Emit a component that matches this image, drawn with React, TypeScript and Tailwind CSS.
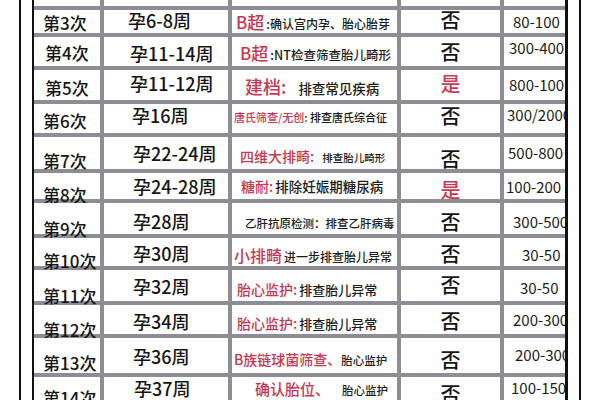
import React from "react";

const R = "text-[#c8374f]";
const K = "text-[#1b1b1b]";

type Row = {
  c1: string; t1: string;
  c2: string; t2: string;
  c3: string; t3: React.ReactNode;
  c4: string; yes?: boolean;
  c5: string; t5: string;
};

const rows: Row[] = [
  { c1: "pt-[4px] pl-[9px]", t1: "第3次", c2: "pt-[1px] pl-[24px]", t2: "孕6-8周", c3: "pt-[3px] pl-[4px]",
    t3: (<><span className={`${R} text-[17px]`}>B超</span><span className={`${K} text-[12px] ml-[2px]`}>:确认宫内孕、胎心胎芽</span></>),
    c4: "pt-[0px]", c5: "pt-[4px] pl-[9px]", t5: "80-100" },
  { c1: "pt-[7px] pl-[11px]", t1: "第4次", c2: "pt-[7px] pl-[26px]", t2: "孕11-14周", c3: "pt-[7px] pl-[8px]",
    t3: (<><span className={`${R} text-[17px]`}>B超</span><span className={`${K} text-[12.5px] ml-[2px]`}>:NT检查筛查胎儿畸形</span></>),
    c4: "pt-[5px]", c5: "pt-[3px] pl-[5px]", t5: "300-400" },
  { c1: "pt-[9px] pl-[11px]", t1: "第5次", c2: "pt-[4px] pl-[26px]", t2: "孕11-12周", c3: "pt-[7px] pl-[13px]",
    t3: (<><span className={`${R} text-[18px]`}>建档:</span><span className={`${K} text-[13.5px] ml-[12px]`}>排查常见疾病</span></>),
    c4: "pt-[4px]", yes: true, c5: "pt-[7px] pl-[5px]", t5: "800-1000" },
  { c1: "pt-[8px] pl-[9px]", t1: "第6次", c2: "pt-[2px] pl-[28px]", t2: "孕16周", c3: "pt-[8px] pl-[2px]",
    t3: (<><span className={`${R} text-[11px]`}>唐氏筛查/无创</span><span className={`${K} text-[11px]`}>: 排查唐氏综合征</span></>),
    c4: "pt-[2px]", c5: "pt-[3px] pl-[3px]", t5: "300/2000" },
  { c1: "pt-[15px] pl-[9px]", t1: "第7次", c2: "pt-[7px] pl-[29px]", t2: "孕22-24周", c3: "pt-[12px] pl-[8px]",
    t3: (<><span className={`${R} text-[14px]`}>四维大排畸:</span><span className={`${K} text-[10.5px] ml-[8px]`}>排查胎儿畸形</span></>),
    c4: "pt-[12px]", c5: "pt-[8px] pl-[4px]", t5: "500-800" },
  { c1: "pt-[13px] pl-[9px]", t1: "第8次", c2: "pt-[4px] pl-[29px]", t2: "孕24-28周", c3: "pt-[6px] pl-[9px]",
    t3: (<><span className={`${R} text-[14px]`}>糖耐:</span><span className={`${K} text-[13.5px] ml-[2px]`}>排除妊娠期糖尿病</span></>),
    c4: "pt-[7px]", yes: true, c5: "pt-[6px] pl-[2px]", t5: "100-200" },
  { c1: "pt-[17px] pl-[9px]", t1: "第9次", c2: "pt-[9px] pl-[29px]", t2: "孕28周", c3: "pt-[15px] pl-[13px]",
    t3: (<span className={`${K} text-[11.5px]`}>乙肝抗原检测：排查乙肝病毒</span>),
    c4: "pt-[9px]", c5: "pt-[11px] pl-[9px]", t5: "300-500" },
  { c1: "pt-[14px] pl-[9px]", t1: "第10次", c2: "pt-[6px] pl-[29px]", t2: "孕30周", c3: "pt-[9px] pl-[2px]",
    t3: (<><span className={`${R} text-[16px]`}>小排畸</span><span className={`${K} text-[12px] ml-[2px]`}>进一步排查胎儿异常</span></>),
    c4: "pt-[6px]", c5: "pt-[9px] pl-[18px]", t5: "30-50" },
  { c1: "pt-[17px] pl-[9px]", t1: "第11次", c2: "pt-[7px] pl-[29px]", t2: "孕32周", c3: "pt-[12px] pl-[5px]",
    t3: (<><span className={`${R} text-[14px]`}>胎心监护:</span><span className={`${K} text-[13px] ml-[2px]`}>排查胎儿异常</span></>),
    c4: "pt-[5px]", c5: "pt-[10px] pl-[16px]", t5: "30-50" },
  { c1: "pt-[16px] pl-[9px]", t1: "第12次", c2: "pt-[7px] pl-[29px]", t2: "孕34周", c3: "pt-[11px] pl-[5px]",
    t3: (<><span className={`${R} text-[14px]`}>胎心监护:</span><span className={`${K} text-[13px] ml-[2px]`}>排查胎儿异常</span></>),
    c4: "pt-[6px]", c5: "pt-[7px] pl-[9px]", t5: "200-300" },
  { c1: "pt-[16px] pl-[9px]", t1: "第13次", c2: "pt-[9px] pl-[29px]", t2: "孕36周", c3: "pt-[14px] pl-[2px]",
    t3: (<><span className={`${R} text-[14px]`}>B族链球菌筛查、</span><span className={`${K} text-[11.5px]`}>胎心监护</span></>),
    c4: "pt-[12px]", c5: "pt-[9px] pl-[11px]", t5: "200-300" },
  { c1: "pt-[12px] pl-[9px]", t1: "第14次", c2: "pt-[2px] pl-[30px]", t2: "孕37周", c3: "pt-[4px] pl-[23px]",
    t3: (<><span className={`${R} text-[15px]`}>确认胎位、</span><span className={`${K} text-[11.5px] ml-[12px]`}>胎心监护</span></>),
    c4: "pt-[7px]", c5: "pt-[3px] pl-[7px]", t5: "100-150" },
];

export default function App() {
  return (
    <div className="w-[600px] h-[400px] overflow-hidden bg-white flex font-['Noto_Sans_CJK_SC',sans-serif] font-medium leading-none">
      <div className="w-[19px] shrink-0" />
      <div className="w-[1.5px] shrink-0 bg-[#111]" />
      <div className="w-[11.5px] shrink-0" />
      <div className="w-[2px] shrink-0 bg-[#111]" />
      <div className="w-[531px] shrink-0 h-[407px] grid grid-cols-[66px_124px_165px_99px_61px] grid-rows-[6px_23px_29px_30px_29px_32px_26px_31px_28px_31px_29px_35px_30px] gap-[4px] bg-[#8e8d95]">
        <div className="bg-white" />
        <div className="bg-white" />
        <div className="bg-white" />
        <div className="bg-white" />
        <div className="bg-white" />
        {rows.map((r, i) => (
          <React.Fragment key={i}>
            <div className={`bg-white whitespace-nowrap text-[17px] text-[#151515] ${r.c1}`}>{r.t1}</div>
            <div className={`bg-white whitespace-nowrap text-[18px] text-[#151515] ${r.c2}`}>{r.t2}</div>
            <div className={`bg-white whitespace-nowrap flex items-baseline ${r.c3}`}>{r.t3}</div>
            <div className={`bg-white text-center text-[20px] ${r.yes ? "text-[#cc3a50]" : "text-[#151515]"} ${r.c4}`}>{r.yes ? "是" : "否"}</div>
            <div className={`bg-white whitespace-nowrap overflow-hidden font-normal text-[15px] text-[#1b1b1b] ${r.c5}`}>{r.t5}</div>
          </React.Fragment>
        ))}
      </div>
      <div className="w-[3px] shrink-0 bg-[#111]" />
      <div className="w-[11px] shrink-0" />
      <div className="w-[2px] shrink-0 bg-[#111]" />
      <div className="flex-1" />
    </div>
  );
}
